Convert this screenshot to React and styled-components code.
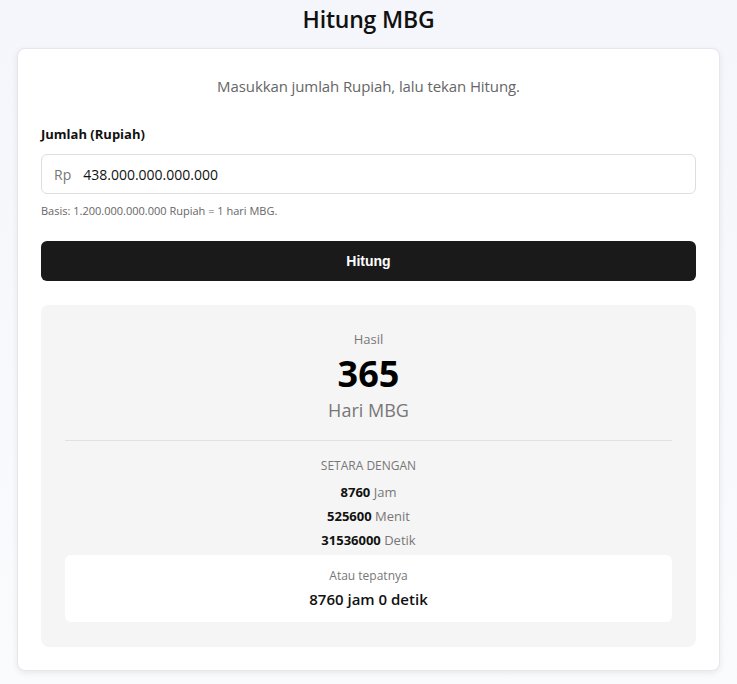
import React, { useState } from 'react';
import styled, { createGlobalStyle } from 'styled-components';

const GlobalStyle = createGlobalStyle`
  * { box-sizing: border-box; }
  body {
    margin: 0;
    font-family: "Open Sans", "Noto Sans", sans-serif;
    background: linear-gradient(180deg, #f5f6fb 0%, #fafbfd 100%);
    color: #111;
  }
`;

const Page = styled.div`
  padding: 0 17px 14px;
  min-height: 684px;
`;

const Title = styled.h1`
  margin: 0;
  padding-top: 3px;
  height: 48px;
  text-align: center;
  font-size: 23px;
  font-weight: 600;
  color: #111;
  letter-spacing: -0.2px;
`;

const Card = styled.div`
  background: #fff;
  border: 1px solid #e6e7eb;
  border-radius: 8px;
  box-shadow: 0 2px 6px rgba(0, 0, 0, 0.08);
  padding: 27px 23px 23px;
`;

const Subtitle = styled.p`
  margin: 0 0 29px;
  text-align: center;
  font-size: 15px;
  color: #666;
  letter-spacing: -0.1px;
`;

const Label = styled.label`
  display: block;
  font-size: 13px;
  font-weight: 700;
  margin-bottom: 11px;
`;

const InputWrap = styled.div`
  display: flex;
  align-items: center;
  height: 40px;
  border: 1px solid #dedede;
  border-radius: 6px;
  padding: 0 12px;
  gap: 12px;
`;

const Prefix = styled.span`
  font-size: 14px;
  color: #777;
`;

const Input = styled.input`
  flex: 1;
  border: none;
  outline: none;
  font-family: inherit;
  font-size: 14px;
  color: #111;
  padding: 0;
  background: transparent;
`;

const Hint = styled.p`
  margin: 9px 0 23px;
  font-size: 11px;
  color: #666;
`;

const Button = styled.button`
  display: block;
  width: 100%;
  height: 40px;
  border: none;
  border-radius: 6px;
  background: #1a1a1a;
  color: #fff;
  font-family: "Liberation Sans", Arial, sans-serif;
  font-weight: 700;
  font-size: 14px;
  cursor: pointer;
`;

const Result = styled.div`
  margin-top: 24px;
  background: #f5f5f5;
  border-radius: 8px;
  padding: 25px 24px 25px;
  text-align: center;
`;

const Small = styled.div`
  font-size: ${p => p.$size || 13}px;
  color: #777;
  text-transform: ${p => (p.$upper ? 'uppercase' : 'none')};
  margin-bottom: ${p => p.$gap || 0}px;
`;

const Big = styled.div`
  font-size: 36px;
  font-weight: 700;
  line-height: 48px;
  color: #000;
  margin-top: 2px;
`;

const Unit = styled.div`
  font-size: 18px;
  color: #777;
  line-height: 24px;
`;

const Divider = styled.hr`
  border: none;
  border-top: 1px solid #e0e0e0;
  margin: 18px 0 16px;
`;

const Line = styled.div`
  font-size: 13px;
  line-height: 24px;
  color: #777;

  b {
    color: #111;
    font-weight: 700;
  }
`;

const Exact = styled.div`
  background: #fff;
  border-radius: 6px;
  margin-top: 3px;
  padding: 12px 12px 13px;
`;

const ExactValue = styled.div`
  font-size: 15px;
  font-weight: 600;
  color: #111;
  margin-top: 5px;
`;

const App = () => {
  const [value, setValue] = useState('438.000.000.000.000');

  return (
    <>
      <GlobalStyle />
      <Page>
        <Title>Hitung MBG</Title>
        <Card>
          <Subtitle>Masukkan jumlah Rupiah, lalu tekan Hitung.</Subtitle>
          <Label>Jumlah (Rupiah)</Label>
          <InputWrap>
            <Prefix>Rp</Prefix>
            <Input value={value} onChange={e => setValue(e.target.value)} />
          </InputWrap>
          <Hint>Basis: 1.200.000.000.000 Rupiah = 1 hari MBG.</Hint>
          <Button>Hitung</Button>
          <Result>
            <Small>Hasil</Small>
            <Big>365</Big>
            <Unit>Hari MBG</Unit>
            <Divider />
            <Small $size={12} $upper $gap={6}>Setara dengan</Small>
            <Line><b>8760</b> Jam</Line>
            <Line><b>525600</b> Menit</Line>
            <Line><b>31536000</b> Detik</Line>
            <Exact>
              <Small $size={12}>Atau tepatnya</Small>
              <ExactValue>8760 jam 0 detik</ExactValue>
            </Exact>
          </Result>
        </Card>
      </Page>
    </>
  );
};

export default App;
